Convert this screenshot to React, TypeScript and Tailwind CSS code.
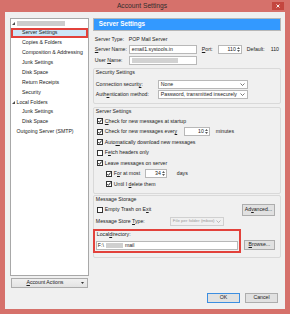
import type { ReactNode } from 'react';

function U({ children }: { children: ReactNode }) {
  return <span className="underline decoration-[0.5px] underline-offset-[1px]">{children}</span>;
}

function Check({ on }: { on?: boolean }) {
  return (
    <svg width="6" height="6" viewBox="0 0 6 6" className="shrink-0">
      <rect x="0.5" y="0.5" width="5" height="5" fill="#fff" stroke="#333" />
      {on && <path d="M1.3 3.1 L2.5 4.3 L4.7 1.5" fill="none" stroke="#1f1f1f" strokeWidth="1" />}
    </svg>
  );
}

function Chevron({ color = '#555' }: { color?: string }) {
  return (
    <svg width="5" height="3" viewBox="0 0 5 3" className="shrink-0">
      <path d="M0.5 0.5 L2.5 2.5 L4.5 0.5" fill="none" stroke={color} strokeWidth="0.8" />
    </svg>
  );
}

function Spin({ v, className }: { v: string; className: string }) {
  return (
    <div className={`h-[9px] flex border border-[#b8b8b8] bg-white shrink-0 ${className}`}>
      <div className="flex-1 flex items-center justify-end pr-[1px]">{v}</div>
      <div className="w-[4px] flex flex-col items-center justify-center gap-[1px]">
        <svg width="3" height="2" viewBox="0 0 3 2">
          <path d="M0 2 L1.5 0 L3 2Z" fill="#5a5a5a" />
        </svg>
        <svg width="3" height="2" viewBox="0 0 3 2">
          <path d="M0 0 L1.5 2 L3 0Z" fill="#5a5a5a" />
        </svg>
      </div>
    </div>
  );
}

function Select({ text, className, disabled }: { text: string; className: string; disabled?: boolean }) {
  return (
    <div
      className={`h-[9px] flex items-center justify-between pl-[2px] pr-[2px] border shrink-0 ${
        disabled ? 'border-[#d0d0d0] bg-[#f0f0f0] text-[#9a9a9a] text-[4.4px]' : 'border-[#b8b8b8] bg-white'
      } ${className}`}
    >
      <span>{text}</span>
      <Chevron color={disabled ? '#aaa' : '#555'} />
    </div>
  );
}

function Btn({ children, className, def }: { children: ReactNode; className: string; def?: boolean }) {
  return (
    <div
      className={`flex items-center justify-center border bg-[#e1e1e1] shrink-0 ${
        def ? 'border-[#3c8ee0]' : 'border-[#adadad]'
      } ${className}`}
    >
      {children}
    </div>
  );
}

function Tri() {
  return (
    <svg width="3" height="3" viewBox="0 0 3 3" className="shrink-0">
      <path d="M3 0 L3 3 L0 3Z" fill="#4a4a4a" />
    </svg>
  );
}

function Group({ title, children, className }: { title: string; children: ReactNode; className: string }) {
  return (
    <div className={`border border-[#d9d9d9] rounded-[2px] flex flex-col ${className}`}>
      <div className="h-[7px] flex items-center pl-[2px]">{title}</div>
      {children}
    </div>
  );
}

function Row({ children, className = '' }: { children: ReactNode; className?: string }) {
  return <div className={`h-[10.5px] flex items-center gap-[2px] ${className}`}>{children}</div>;
}

const treeChildren = ['Copies & Folders', 'Composition & Addressing', 'Junk Settings', 'Disk Space', 'Return Receipts', 'Security'];

export default function App() {
  return (
    <div className="w-[290px] h-[314px] bg-[#d6716b] flex flex-col font-['Liberation_Sans',Arial,sans-serif] text-[5.2px] leading-none text-[#1b1b1b] whitespace-nowrap overflow-hidden">
      {/* title bar */}
      <div className="h-[12px] flex shrink-0">
        <div className="flex-1" />
        <div className="flex items-center text-[6.7px] text-[#2e2e2e]">Account Settings</div>
        <div className="flex-1 flex justify-end pr-[6px] pt-[2px]">
          <div className="w-[12px] h-[8px] bg-[#c4463f] flex items-center justify-center">
            <svg width="4" height="4" viewBox="0 0 4 4">
              <path d="M0.5 0.5 L3.5 3.5 M3.5 0.5 L0.5 3.5" stroke="#fff" strokeWidth="0.9" />
            </svg>
          </div>
        </div>
      </div>

      {/* client area */}
      <div className="flex-1 mx-[5px] mb-[5px] bg-[#f0f0f0] flex flex-col pt-[6px] pl-[5px] pr-[4px] pb-[6px]">
        <div className="h-[270px] flex gap-[4px]">
          {/* left column */}
          <div className="w-[79px] flex flex-col">
            <div className="h-[258px] bg-white border border-[#a8a8a8] flex flex-col">
              <div className="h-[9px] flex items-center pl-[0.5px] gap-[2px]">
                <Tri />
                <div className="w-[48px] h-[5px] bg-[#cdcdcd] blur-[0.6px]" />
              </div>
              <div className="h-[9.9px] flex items-center pl-[9px] border-2 border-[#e2413b] bg-[#cde6f7]">
                Server Settings
              </div>
              {treeChildren.map((t) => (
                <div key={t} className="h-[9.9px] flex items-center pl-[11px]">
                  {t}
                </div>
              ))}
              <div className="h-[9.9px] flex items-center pl-[0.5px] gap-[2px]">
                <Tri />
                <span>Local Folders</span>
              </div>
              <div className="h-[9.9px] flex items-center pl-[11px]">Junk Settings</div>
              <div className="h-[9.9px] flex items-center pl-[11px]">Disk Space</div>
              <div className="h-[9.9px] flex items-center pl-[5.5px]">Outgoing Server (SMTP)</div>
            </div>
            <div className="mt-[2px] mx-[1px] h-[10px] flex items-center border border-[#acacac] bg-gradient-to-b from-[#f0f0f0] to-[#e3e3e3]">
              <div className="flex-1 text-center">
                <U>A</U>ccount Actions
              </div>
              <div className="w-[9px] flex justify-center">
                <svg width="3" height="2" viewBox="0 0 3 2">
                  <path d="M0 0 L1.5 2 L3 0Z" fill="#333" />
                </svg>
              </div>
            </div>
          </div>

          {/* right column */}
          <div className="flex-1 flex flex-col">
            <div className="h-[13px] border border-[#b7b7b7] bg-[#3399ff] flex items-center pl-[5px] text-white font-bold text-[6.3px]">
              Server Settings
            </div>

            <div className="mt-[4px] h-[9px] flex items-center px-[2px]">
              <span className="w-[34px]">Server Type:</span>
              <span>POP Mail Server</span>
            </div>

            <div className="mt-[1px] h-[9px] flex items-center px-[2px]">
              <span className="w-[34px]">
                <U>S</U>erver Name:
              </span>
              <div className="w-[68px] h-[9px] border border-[#b8b8b8] bg-white flex items-center pl-[2px]">
                email1.systools.in
              </div>
              <span className="ml-[5px] w-[16px]">
                <U>P</U>ort:
              </span>
              <Spin v="110" className="w-[24px]" />
              <span className="ml-[5px]">Default:</span>
              <span className="ml-[6px]">110</span>
            </div>

            <div className="mt-[2px] h-[9px] flex items-center px-[2px]">
              <span className="w-[34px]">
                User <U>N</U>ame:
              </span>
              <div className="w-[68px] h-[9px] border border-[#b8b8b8] bg-white flex items-center pl-[2px]">
                <div className="w-[46px] h-[5px] bg-[#d2d2d2] blur-[0.6px]" />
              </div>
            </div>

            <Group title="Security Settings" className="mt-[3px] pb-[4px]">
              <div className="mt-[4px] h-[9px] flex items-center pl-[2px]">
                <span className="w-[62px]">
                  Connection securit<U>y</U>:
                </span>
                <Select text="None" className="w-[90px]" />
              </div>
              <div className="mt-[1px] h-[9px] flex items-center pl-[2px]">
                <span className="w-[62px]">
                  Auth<U>e</U>ntication method:
                </span>
                <Select text="Password, transmitted insecurely" className="w-[90px]" />
              </div>
            </Group>

            <Group title="Server Settings" className="mt-[3px] pb-[3.5px]">
              <div className="mt-[1px] flex flex-col pl-[3px]">
                <Row>
                  <Check on />
                  <span>
                    <U>C</U>heck for new messages at startup
                  </span>
                </Row>
                <Row>
                  <Check on />
                  <span className="w-[77px]">
                    Check for new messages ever<U>y</U>
                  </span>
                  <Spin v="10" className="w-[26px]" />
                  <span className="ml-[4px]">minutes</span>
                </Row>
                <Row>
                  <Check on />
                  <span>
                    Auto<U>m</U>atically download new messages
                  </span>
                </Row>
                <Row>
                  <Check />
                  <span>
                    F<U>e</U>tch headers only
                  </span>
                </Row>
                <Row>
                  <Check on />
                  <span>Leave messages on server</span>
                </Row>
                <Row className="pl-[9px]">
                  <Check on />
                  <span className="w-[29px]">
                    F<U>o</U>r at most
                  </span>
                  <Spin v="34" className="w-[22px]" />
                  <span className="ml-[8px]">days</span>
                </Row>
                <Row className="pl-[9px]">
                  <Check on />
                  <span>
                    Until I <U>d</U>elete them
                  </span>
                </Row>
              </div>
            </Group>

            <Group title="Message Storage" className="mt-[1px] pb-[4px]">
              <div className="mt-[1px] h-[12px] flex items-center pl-[3px] pr-[5px]">
                <Check />
                <span className="ml-[2px]">
                  Empty Trash on E<U>x</U>it
                </span>
                <Btn className="ml-auto w-[33px] h-[12px]">
                  Ad<U>v</U>anced...
                </Btn>
              </div>
              <div className="mt-[1px] h-[9px] flex items-center pl-[2px]">
                <span className="w-[74px]">
                  Message Store <U>T</U>ype:
                </span>
                <Select text="File per folder (mbox)" className="w-[54px]" disabled />
              </div>
              <div className="mt-[3px] flex items-end">
                <div className="ml-[-1px] w-[148px] border-2 border-[#e2413b] flex flex-col px-[1px] pb-[1px]">
                  <div className="h-[8px] flex items-center pl-[1px]">
                    Local <U>d</U>irectory:
                  </div>
                  <div className="mt-[2px] h-[9px] border border-[#b8b8b8] bg-white flex items-center pl-[1px]">
                    <span>F:\</span>
                    <div className="ml-[2px] w-[17px] h-[5px] bg-[#cfcfcf] blur-[0.5px]" />
                    <span className="ml-[2px]">mail</span>
                  </div>
                </div>
                <Btn className="ml-[3px] mb-[3px] w-[31px] h-[10px]">
                  <U>B</U>rowse...
                </Btn>
              </div>
            </Group>
          </div>
        </div>

        <div className="mt-[5px] h-[10px] flex justify-end gap-[5px] pr-[3px]">
          <Btn className="w-[33px] h-[10px]" def>
            OK
          </Btn>
          <Btn className="w-[33px] h-[10px]">Cancel</Btn>
        </div>
      </div>
    </div>
  );
}
